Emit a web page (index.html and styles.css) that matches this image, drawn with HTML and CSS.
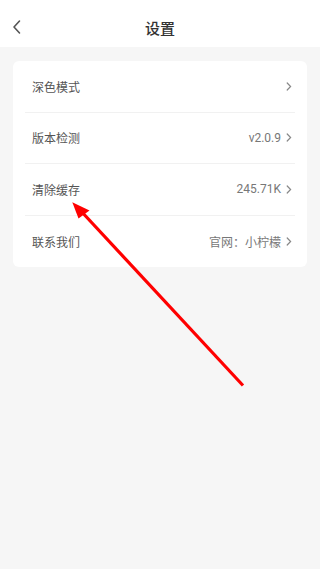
FILE: index.html
```html
<!DOCTYPE html>
<html lang="zh-CN">
<head>
    <meta charset="UTF-8">
    <meta name="viewport" content="width=device-width, initial-scale=1.0">
    <title>设置</title>
    <link rel="stylesheet" href="styles.css">
</head>
<body>
    <div class="header">
        <svg class="back" width="10" height="16" viewBox="0 0 10 16">
            <path d="M7.5 2 L2 8 L7.5 14" fill="none" stroke="#555" stroke-width="1.6" stroke-linecap="round" stroke-linejoin="round"/>
        </svg>
        <div class="title">设置</div>
    </div>

    <div class="card">
        <div class="row">
            <span class="label">深色模式</span>
            <span class="value"><svg class="arrow" width="6" height="9" viewBox="0 0 6 9"><path d="M1.2 1 L4.6 4.5 L1.2 8" fill="none" stroke="#888" stroke-width="1.2" stroke-linecap="round"/></svg></span>
        </div>
        <div class="row">
            <span class="label">版本检测</span>
            <span class="value">v2.0.9<svg class="arrow" width="6" height="9" viewBox="0 0 6 9"><path d="M1.2 1 L4.6 4.5 L1.2 8" fill="none" stroke="#888" stroke-width="1.2" stroke-linecap="round"/></svg></span>
        </div>
        <div class="row">
            <span class="label">清除缓存</span>
            <span class="value">245.71K<svg class="arrow" width="6" height="9" viewBox="0 0 6 9"><path d="M1.2 1 L4.6 4.5 L1.2 8" fill="none" stroke="#888" stroke-width="1.2" stroke-linecap="round"/></svg></span>
        </div>
        <div class="row">
            <span class="label">联系我们</span>
            <span class="value">官网：小柠檬<svg class="arrow" width="6" height="9" viewBox="0 0 6 9"><path d="M1.2 1 L4.6 4.5 L1.2 8" fill="none" stroke="#888" stroke-width="1.2" stroke-linecap="round"/></svg></span>
        </div>
    </div>

    <!-- annotation arrow drawn over the page -->
    <svg class="pointer" width="320" height="569" viewBox="0 0 320 569">
        <line x1="243" y1="385.5" x2="80" y2="210" stroke="#f00" stroke-width="3.2"/>
        <polygon points="72.3,202.3 78.5,218.5 89.5,210.5" fill="#f00"/>
    </svg>
</body>
</html>
```

FILE: styles.css
```css
html, body {
    margin: 0;
    padding: 0;
}
body {
    font-family: "Noto Sans CJK SC", "Noto Sans", sans-serif;
    background-color: #f6f6f6;
    width: 320px;
    height: 569px;
    position: relative;
    overflow: hidden;
}
.header {
    height: 47px;
    background-color: #fff;
    display: flex;
    align-items: center;
    justify-content: center;
    position: relative;
}
.back {
    position: absolute;
    left: 12px;
    top: 19px;
}
.title {
    font-size: 15px;
    font-weight: 500;
    color: #333;
    margin-top: 8px;
}
.card {
    background-color: #fff;
    margin: 14px 13px 0;
    border-radius: 6px;
    padding: 0 12px;
}
.row {
    height: 51.5px;
    display: flex;
    align-items: center;
    justify-content: space-between;
    border-bottom: 1px solid #f1f1f1;
    box-sizing: border-box;
    padding: 0 3px 0 7px;
}
.row:last-child {
    border-bottom: none;
}
.label {
    font-size: 12px;
    color: #555;
}
.value {
    font-family: Roboto, "Noto Sans CJK SC", sans-serif;
    font-size: 12px;
    color: #777;
    display: flex;
    align-items: center;
}
.arrow {
    margin-left: 5px;
}
.pointer {
    position: absolute;
    left: 0;
    top: 0;
    pointer-events: none;
}
```
